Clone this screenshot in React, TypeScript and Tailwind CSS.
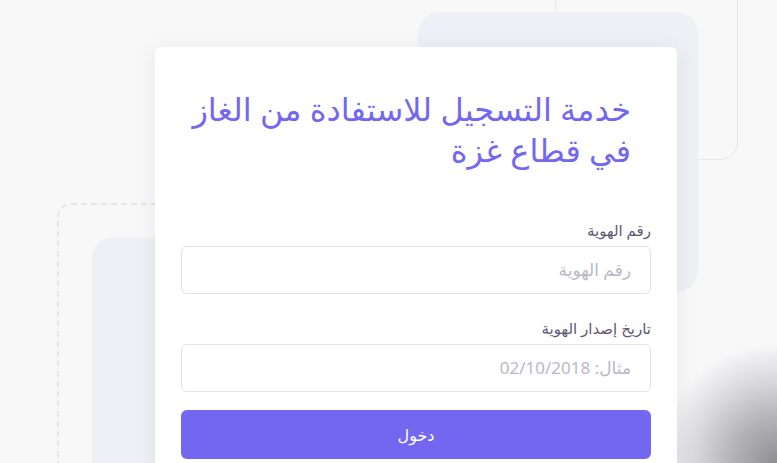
import React from "react";

export default function App() {
  return (
    <div className="relative w-[777px] h-[463px] overflow-hidden bg-[#f8f8f9]" style={{ fontFamily: '"Noto Sans", "DejaVu Sans", sans-serif' }}>
      {/* decorative background shapes */}
      <div className="absolute left-[555px] top-[-40px] w-[183px] h-[200px] rounded-[18px] border border-[#e6e6ec]" />
      <div className="absolute left-[418px] top-[12px] w-[280px] h-[280px] rounded-[22px] bg-[#efeff6]" />
      <div className="absolute left-[57px] top-[203px] w-[300px] h-[320px] rounded-[14px] border-2 border-dashed border-[#e4e4ea]" />
      <div className="absolute left-[92px] top-[238px] w-[200px] h-[300px] rounded-[20px] bg-[#efeff6]" />
      <div className="absolute left-[597px] top-[283px] w-[180px] h-[180px] bg-[radial-gradient(circle_120px_at_100%_100%,#8e8e93_0%,#b0b0b5_35%,#dadade_70%,rgba(248,248,249,0)_100%)]" />

      <div className="relative flex pt-[47px] pl-[155px]">
        <div dir="rtl" className="flex flex-col w-[522px] h-[440px] bg-white rounded-[6px] shadow-[0_4px_24px_rgba(34,41,47,0.08)] pt-[41px] px-[26px]">
          <h1 className="pr-[20px] whitespace-nowrap text-[32px] leading-[41px] text-[#7367f0] font-medium">
            خدمة التسجيل للاستفادة من الغاز
            <br />
            في قطاع غزة
          </h1>

          <div className="flex flex-col gap-[6px] mt-[50px]">
            <label className="text-[15px] leading-[20px] text-[#5e5873]">رقم الهوية</label>
            <div className="h-[48px] rounded-[6px] border border-[#e2e2e6] flex items-center pr-[19px] text-[17px] text-[#b9b9c3]">
              رقم الهوية
            </div>
          </div>

          <div className="flex flex-col gap-[6px] mt-[24px]">
            <label className="text-[15px] leading-[20px] text-[#5e5873]">تاريخ إصدار الهوية</label>
            <div className="h-[48px] rounded-[6px] border border-[#e2e2e6] flex items-center pr-[19px] text-[17px] text-[#b9b9c3]">
              مثال: 02/10/2018
            </div>
          </div>

          <button className="mt-[18px] w-full h-[49px] rounded-[6px] bg-[#7367f0] text-white text-[16px]">
            دخول
          </button>
        </div>
      </div>
    </div>
  );
}
